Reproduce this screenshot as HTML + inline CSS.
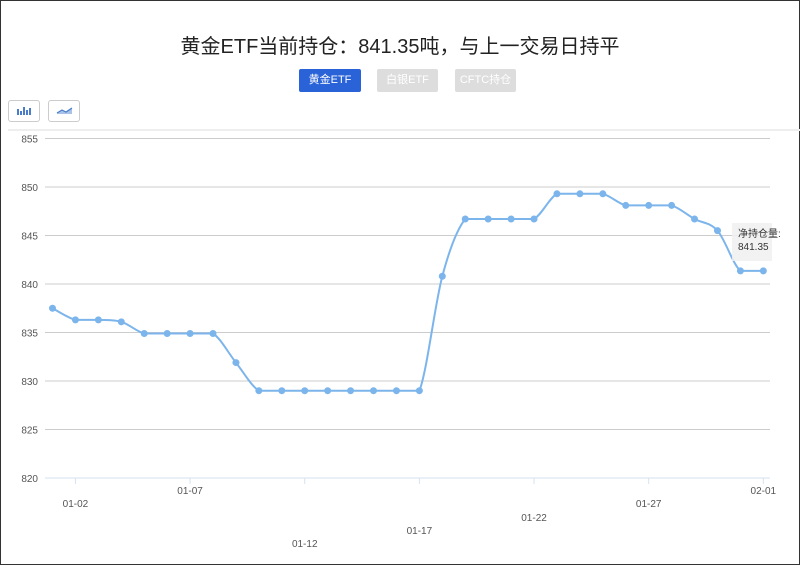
<!DOCTYPE html>
<html><head><meta charset="utf-8"><style>
body{margin:0;width:800px;height:565px;overflow:hidden;background:#fff;font-family:"Liberation Sans","Noto Sans CJK SC",sans-serif;}
.frame{position:absolute;left:0;top:0;width:798px;height:563px;border:1px solid #333;}
.title{position:absolute;top:30px;left:0;width:800px;text-align:center;font-size:20px;color:#222;}
.btn{position:absolute;top:69px;height:23px;line-height:23px;font-size:11px;color:#fff;text-align:center;border-radius:2px;}
.ib{position:absolute;top:100px;width:30px;height:20px;border:1px solid #ccc;border-radius:3px;background:#fff;}
</style></head><body>
<div class="frame"></div>
<div class="title">黄金ETF当前持仓：841.35吨，与上一交易日持平</div>
<div class="btn" style="left:299px;width:62px;background:#2a62d8">黄金ETF</div>
<div class="btn" style="left:377px;width:61px;background:#ddd">白银ETF</div>
<div class="btn" style="left:455px;width:61px;background:#ddd">CFTC持仓</div>
<div class="ib" style="left:8px"><svg width="30" height="20"><g fill="#4a7cc9"><rect x="8" y="8" width="2" height="6"/><rect x="11" y="10" width="2" height="4"/><rect x="14" y="6" width="2" height="8"/><rect x="17" y="9" width="2" height="5"/><rect x="20" y="7" width="2" height="7"/></g></svg></div>
<div class="ib" style="left:48px"><svg width="30" height="20"><path d="M8 12 L13 9 L17 11 L23 7 L23 13 L8 13Z" fill="#a9c2e8"/><path d="M8 12 L13 9 L17 11 L23 7" stroke="#4a7cc9" fill="none" stroke-width="1.2"/></svg></div>
<div style="position:absolute;left:8px;top:129px;width:792px;height:2px;background:#eee"></div>
<svg id="c" width="800" height="565" style="position:absolute;left:0;top:0" font-family="Liberation Sans, sans-serif" font-size="10" fill="#555"></svg>
<div style="position:absolute;left:732px;top:223px;width:40px;height:38px;background:rgba(240,240,240,0.85);font-size:10px;color:#333;line-height:13px;padding:5px 0 0 6px;box-sizing:border-box;white-space:nowrap">净持仓量:<br>841.35</div>
<script>
var s='';
var vals=[837.5,836.3,836.3,836.1,834.9,834.9,834.9,834.9,831.9,829,829,829,829,829,829,829,829,840.8,846.7,846.7,846.7,846.7,849.3,849.3,849.3,848.1,848.1,848.1,846.7,845.5,841.35,841.35];
function Y(v){return 478-(v-820)*9.7;}
for(var i=0;i<8;i++){var v=855-5*i,y=Y(v);
 s+='<line x1="45" x2="770" y1="'+y+'" y2="'+y+'" stroke="'+(i==7?'#d6e2f0':'#ccc')+'" stroke-width="1"/>';
 s+='<text x="38" y="'+(y+4)+'" text-anchor="end">'+v+'</text>';}
var X=function(i){return 52.5+i*22.93;};
var labs=[['01-02',1,507],['01-07',6,494],['01-12',11,547],['01-17',16,534],['01-22',21,521],['01-27',26,507],['02-01',31,494]];
labs.forEach(function(l){var x=X(l[1]);s+='<line x1="'+x+'" x2="'+x+'" y1="478" y2="484" stroke="#d6e2f0"/>';s+='<text x="'+x+'" y="'+l[2]+'" text-anchor="middle">'+l[0]+'</text>';});
var p=vals.map(function(v,i){return [X(i),Y(v)];});
var d='M'+p[0][0]+' '+p[0][1];
for(var i=0;i<p.length-1;i++){var p0=p[Math.max(i-1,0)],p1=p[i],p2=p[i+1],p3=p[Math.min(i+2,p.length-1)];var t=0.5/3;
 var c1=[p1[0]+(p2[0]-p0[0])*t,p1[1]+(p2[1]-p0[1])*t],c2=[p2[0]-(p3[0]-p1[0])*t,p2[1]-(p3[1]-p1[1])*t];
 if(p1[1]==p2[1]){c1[1]=p1[1];c2[1]=p2[1];}
 d+=' C'+c1+' '+c2+' '+p2;}
s+='<path d="'+d+'" fill="none" stroke="#7cb5ec" stroke-width="2"/>';
p.forEach(function(q){s+='<circle cx="'+q[0]+'" cy="'+q[1]+'" r="3.5" fill="#7cb5ec"/>';});
document.getElementById('c').innerHTML=s;
</script>
</body></html>
